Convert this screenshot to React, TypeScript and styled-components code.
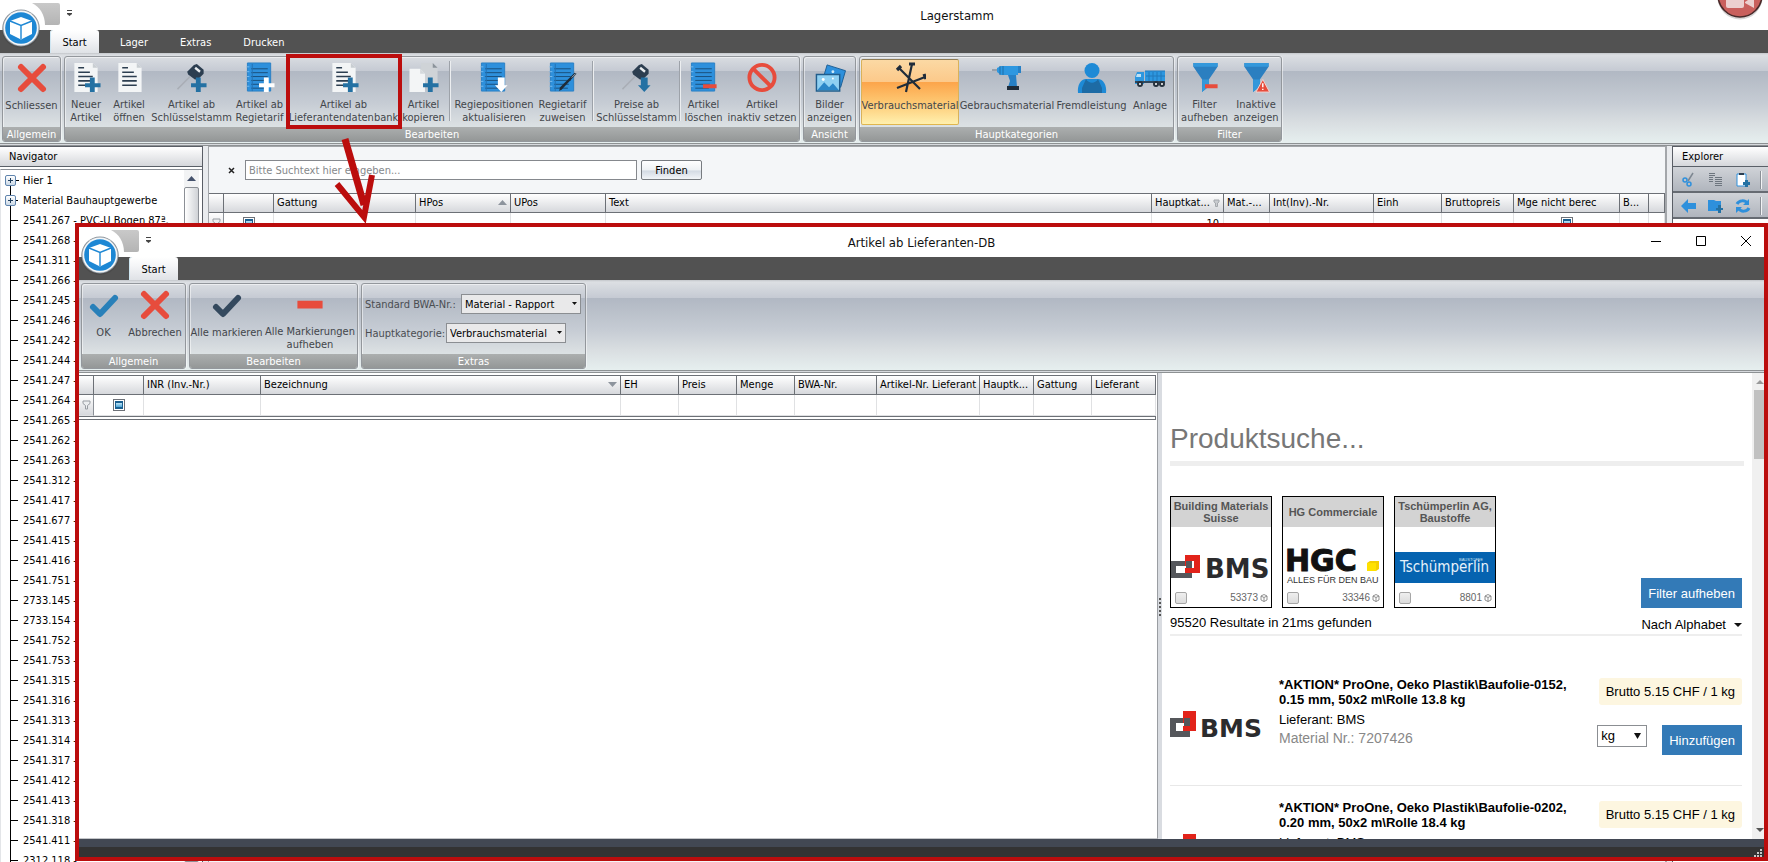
import React, { ReactNode } from 'react';
import styled, { createGlobalStyle, css } from 'styled-components';

const ui = `'DejaVu Sans Condensed', 'DejaVu Sans', sans-serif`;
const web = `'Liberation Sans', Arial, sans-serif`;
const accent = '#bb0d0d';

const GlobalStyle = createGlobalStyle`
  * { box-sizing: border-box; }
  html, body { margin: 0; height: 100%; overflow: hidden; }
  body { font: 11px/13px ${ui}; color: #000; background: #fff; }
  button, input, select { font: inherit; color: inherit; margin: 0; }
  h1, h2, h3, p, ul, dl { margin: 0; padding: 0; font-weight: normal; }
`;

/* ---------- window frame ---------- */

const Desktop = styled.div`
  position: relative;
  display: flex;
  flex-direction: column;
  height: 100vh;
  overflow: hidden;
  background: #e9ebee;
`;

const TitleBar = styled.header`
  position: relative;
  display: flex;
  align-items: center;
  justify-content: center;
  flex: none;
  height: 30px;
  background: #fff;
`;

const TitleText = styled.h1<{ $shift?: boolean }>`
  padding-top: 1px;
  font-size: 13px;
  line-height: 16px;
  color: #111;
  padding-left: ${(p) => (p.$shift ? '146px' : '0')};
`;

const AppBadge = styled.svg`
  position: absolute;
  left: 0;
  top: 0;
  z-index: 2;
  width: 80px;
  height: 50px;
`;

const RecordBadge = styled.svg`
  position: absolute;
  right: 0;
  top: 0;
  width: 56px;
  height: 24px;
`;

const WindowButtons = styled.div`
  position: absolute;
  right: 0;
  top: 0;
  display: flex;
  gap: 9px;
`;

const WindowButton = styled.button`
  width: 36px;
  height: 28px;
  padding: 0;
  border: 0;
  background: none;
  display: flex;
  align-items: center;
  justify-content: center;
`;

const TabBar = styled.nav`
  display: flex;
  flex: none;
  height: 23px;
  padding-left: 50px;
  background: #525252;
`;

const Tab = styled.button<{ $active?: boolean }>`
  border: 0;
  padding: 1px 16px 0;
  background: none;
  color: #fff;
  ${(p) =>
    p.$active &&
    css`
      width: 49px;
      margin-right: 5px;
      padding: 1px 0 0;
      border-radius: 3px 3px 0 0;
      color: #000;
      background: linear-gradient(#fff, #f4f5f7 40%, #dfe2e6);
      box-shadow: inset 1px 0 #cfe6f2;
    `}
`;

const Ribbon = styled.section`
  display: flex;
  flex: none;
  gap: 3px;
  height: 93px;
  padding: 3px 2px 0;
  border-bottom: 3px double #8d9193;
  background: linear-gradient(#c3c6ca 0, #dcdfe3 2px, #c5cad3 18px, #b1b8c3 18px, #c6ccd4 50px, #d9dee1 70px, #e6efef 90px);
`;

const Group = styled.div`
  display: flex;
  flex-direction: column;
  height: 86px;
  border: 1px solid #93979c;
  border-radius: 3px;
  box-shadow: inset 1px 1px rgba(255, 255, 255, 0.5), 1px 0 rgba(255, 255, 255, 0.5);
  overflow: hidden;
`;

const GroupBody = styled.div<{ $inset?: boolean }>`
  display: flex;
  flex: 1;
  padding: 2px ${(p) => (p.$inset ? '1px' : '0')};
`;

const GroupCaption = styled.h2`
  flex: none;
  height: 14px;
  padding-top: 1px;
  font-size: 11px;
  line-height: 13px;
  text-align: center;
  color: #fff;
  background: linear-gradient(#acafaf, #949797);
`;

const Action = styled.button<{ $w: number; $active?: boolean }>`
  display: flex;
  flex-direction: column;
  align-items: center;
  justify-content: flex-start;
  gap: 5px;
  width: ${(p) => p.$w}px;
  height: 66px;
  padding: 2px 0 0;
  border: 1px solid transparent;
  background: none;
  color: #43464b;
  white-space: pre;
  text-align: center;
  ${(p) =>
    p.$active &&
    css`
      border-color: #8f7c55 #d9b25a #e0b64e;
      border-radius: 2px;
      background: linear-gradient(#fbd9a4, #fcc98a 34%, #fca54b 35%, #fdc771 65%, #fff0ae);
    `}
`;

const Separator = styled.i<{ $w: number }>`
  width: ${(p) => p.$w}px;
  height: 60px;
  margin-top: 2px;
  background: linear-gradient(90deg, #9da2a9 1px, #eceef0 1px) center / 2px 100% no-repeat;
`;

const svgIcon = { width: 32, height: 32, viewBox: '0 0 32 32', 'aria-hidden': true } as const;
const blue = '#2e90dc';
const navy = '#2c3e50';
const plusBlue = '#2471a3';
const red = '#e74c3c';

const Plus = ({ c = plusBlue }: { c?: string }) => <path d="M20 16h5v6h6v4h-6v5h-5v-5h-5v-4h5z" fill={c} />;

const Page = ({ x = 0 }: { x?: number }) => (
  <g transform={`translate(${x} 0)`}>
    <path d="M4 1h19l5 5v25H4z" fill="#f3f5f6" />
    <path d="M23 1l5 5h-5z" fill="#c9ced2" />
    <path d="M8 6h6M8 10.5h12M8 15h15M8 19.500h15M8 24h15" stroke={navy} strokeWidth="1.6" />
  </g>
);

const Notebook = ({ left = true }: { left?: boolean }) => (
  <g>
    <path d="M3 1h24v29H3z" fill={blue} />
    <path d="M3 1h24v29H3z" fill="none" stroke="#2a80c4" />
    <g stroke="#1a4f7c">
      <path d="M7 7h17M7 11h17M7 15h17M7 19h17M7 23h15M7 27h14" />
      {left && <path d="M8 2v28" stroke="#2473b4" />}
    </g>
    <path d="M2 5h3M2 10h3M2 15h3M2 20h3M2 25h3" stroke="#7cbcec" />
  </g>
);

const Key = () => (
  <g>
    <path d="M14 15L1 28" stroke="#a9aeb5" strokeWidth="1.500" />
    <path d="M11 10L18 3l3-1 7 6v4l-6 6-3 0-7-5z" fill={navy} />
    <path d="M20 5l5 4-1.500 2-5-4z" fill="#e9edf0" />
  </g>
);

const ArrowDown = ({ c }: { c: string }) => <path d="M20 16h7v8h3l-6.500 7-6.500-7h3z" fill={c} />;

const Cross = () => <path d="M5 5l22 22M27 5L5 27" stroke={red} strokeWidth="6" strokeLinecap="round" />;
const Tick = ({ c }: { c: string }) => (
  <path d="M5 18l7 7L27 9" fill="none" stroke={c} strokeWidth="6" strokeLinecap="round" strokeLinejoin="round" />
);
const Funnel = () => (
  <g>
    <path d="M4 1h25v4L20 18v7l-7 6V18L4 5z" fill="#2b7fc0" />
    <path d="M4 1h25v4H4zM13 18h7v7l-7 6z" fill="#3498db" />
  </g>
);

const icons: Record<string, ReactNode> = {
  close: <Cross />,
  newDoc: <><Page /><Plus /></>,
  doc: <Page x={1} />,
  keyPlus: <><Key /><Plus /></>,
  bookPlus: <><Notebook /><Plus c="#fff" /></>,
  copy: (
    <>
      <path d="M13 1h12l5 5v18H13z" fill="#cfd3d7" />
      <path d="M25 1l5 5h-5z" fill="#8b939b" />
      <path d="M1 7h11l5 5v19H1z" fill="#f3f5f6" />
      <path d="M12 7l5 5h-5z" fill="#d5d9dc" />
      <Plus />
    </>
  ),
  bookDown: <><Notebook /><ArrowDown c="#fff" /></>,
  bookPen: (
    <>
      <Notebook />
      <path d="M30 12L15 28l-3 2 1-4L28 11z" fill="#1f2b38" />
      <path d="M29 12l-4 4" stroke="#9fb0bf" />
    </>
  ),
  keyDown: <><Key /><ArrowDown c={plusBlue} /></>,
  bookMinus: <><Notebook left={false} /><path d="M15 23h14v4H15z" fill={red} /></>,
  ban: (
    <g fill="none" stroke={red} strokeWidth="4">
      <circle cx="16" cy="16" r="13" />
      <path d="M7 7l18 18" />
    </g>
  ),
  pictures: (
    <>
      <path d="M13 3l19 6-5 17-19-6z" fill={blue} stroke="#1d5f96" />
      <circle cx="19" cy="10" r="1.500" fill="#cdeafa" />
      <path d="M2 13h24v17H2z" fill="#8fd0f2" stroke="#215d8c" strokeWidth="1.500" />
      <path d="M3 29l7-8 5 5 4-4 6 7z" fill="#2a86c8" />
      <circle cx="9" cy="18" r="1.500" fill="#fff" />
      <circle cx="19" cy="17" r="1" fill="#fff" />
    </>
  ),
  nails: (
    <g stroke="#1f2c3a" strokeWidth="2.200">
      <path d="M18 2L12 30M5 6l21 21M31 15L3 26" />
      <path d="M15 2h6M3 8l4-4M30 12l2 5" strokeWidth="3.200" />
    </g>
  ),
  drill: (
    <>
      <path d="M1 8h6" stroke="#6b7680" />
      <path d="M6 6l4-2h17v9H10l-4-3z" fill="#2d97e0" />
      <path d="M9 4v9M12 4v9" stroke="#1f6ea8" />
      <path d="M27 4h3v7h-3zM17 13h8l1 12h-9l2-6z" fill="#2680c6" />
      <path d="M16 24h12v4H16z" fill="#1f2c3a" />
    </>
  ),
  person: (
    <>
      <circle cx="16" cy="8.500" r="7.500" fill="#1e8ad6" />
      <path d="M2 31c-1-8 3-14 8-14h12c5 0 9 6 8 14z" fill="#1e8ad6" />
      <path d="M6 31v-5l4-9c3 5 9 5 12 0l4 9v5z" fill="#1d6ba5" />
    </>
  ),
  truck: (
    <>
      <path d="M1 20v-5l2-5h7v12H1z" fill="#2d97e0" />
      <path d="M3 12h4v3H2z" fill="#bfe1f5" />
      <path d="M11 9h20v10H11z" fill="#2d97e0" />
      <path d="M11 9h20M15 10v9M19 10v9M23 10v9M27 10v9M12 14h19" stroke="#2379ba" />
      <path d="M1 19h30v2H1z" fill="#30485c" />
      <g fill="#fff" stroke="#26323d" strokeWidth="2">
        <circle cx="6" cy="22" r="2" /><circle cx="22" cy="22" r="2" /><circle cx="28" cy="22" r="2" />
      </g>
    </>
  ),
  funnelMinus: <><Funnel /><path d="M16 23h13v4H16z" fill={red} /></>,
  funnelWarn: (
    <>
      <Funnel />
      <path d="M23 18l7 13H16z" fill={red} stroke="#f4d2ce" />
      <path d="M23 22v4M23 27.500v1.500" stroke="#fff" strokeWidth="1.500" />
    </>
  ),
  tickBlue: <Tick c="#2980b9" />,
  tickNavy: <Tick c="#34495e" />,
  minus: <path d="M3 12h26v8H3z" fill={red} />,
};

type Item = { icon: string; label: string; w: number; active?: boolean } | { sep: number };

const RibbonGroup = ({ caption, items, inset }: { caption: string; items: Item[]; inset?: boolean }) => (
  <Group>
    <GroupBody $inset={inset}>
      {items.map((it, i) =>
        'sep' in it ? (
          <Separator key={i} $w={it.sep} />
        ) : (
          <Action key={i} type="button" $w={it.w} $active={it.active}>
            <svg {...svgIcon} fill="none">{icons[it.icon]}</svg>
            <span>{it.label}</span>
          </Action>
        ),
      )}
    </GroupBody>
    <GroupCaption>{caption}</GroupCaption>
  </Group>
);

const Badge = ({ id }: { id: string }) => (
  <AppBadge viewBox="0 0 80 50" aria-hidden>
    <defs>
      <linearGradient id={id} x1="0" x2="0" y1="0" y2="1">
        <stop offset="0" stopColor="#c9c9c9" />
        <stop offset="1" stopColor="#b4b4b4" />
      </linearGradient>
    </defs>
    <path d="M32 3h26q2 0 2 2v18q0 2-2 2H45C45 15 40 7 32 3z" fill={`url(#${id})`} />
    <path d="M67 10.500h5M67 13.500h5l-2.500 2z" stroke="#444" fill="#444" />
    <circle cx="21" cy="29" r="19" fill="#3d3d3d" opacity=".35" />
    <circle cx="21" cy="28" r="18.500" fill="#8f979f" />
    <circle cx="21" cy="28" r="17.500" fill="#f4f6f8" />
    <circle cx="21" cy="28" r="15.800" fill="#1d87d4" />
    <path d="M21 17l11 4v13l-11 5.500-11-5.500V21z" fill="#fff" />
    <path d="M10 21l11 4.500L32 21M21 25.500V39" fill="none" stroke="#1d87d4" strokeWidth="1.400" />
  </AppBadge>
);

/* ---------- panels ---------- */

const Workspace = styled.main`
  display: flex;
  flex: 1;
  min-height: 0;
  gap: 5px;
`;

const Navigator = styled.aside`
  display: flex;
  flex-direction: column;
  flex: 0 0 203px;
  border-top: 1px solid #5a5e66;
  border-right: 1px solid #5a5e66;
  background: #fff;
`;

const PanelTitle = styled.h2`
  flex: none;
  height: 20px;
  padding-left: 9px;
  border-bottom: 1px solid #5a6068;
  background: linear-gradient(#fff, #d5d7db);
  font-size: 11px;
  line-height: 20px;
`;

const TreeArea = styled.div`
  display: flex;
  flex: 1;
  min-height: 0;
  margin-top: 2px;
  border-top: 1px solid #8b9097;
  border-left: 1px solid #e3e5e8;
  overflow: hidden;
`;

const Tree = styled.ul`
  flex: 1;
  overflow: hidden;
  list-style: none;
`;

const TreeRow = styled.li<{ $branch?: boolean }>`
  display: flex;
  align-items: center;
  height: 20px;
  padding-left: 22px;
  white-space: nowrap;
  background:
    linear-gradient(#000, #000) 9px 10px / ${(p) => (p.$branch ? '9px' : '8px')} 1px no-repeat,
    linear-gradient(#000, #000) 9px ${(p) => (p.$branch ? '10px' : '0')} / 1px 20px no-repeat;
`;

const Expander = styled.button`
  width: 11px;
  height: 11px;
  margin-left: -18px;
  margin-right: 7px;
  padding: 0;
  border: 1px solid #5f84ad;
  border-radius: 2px;
  background:
    linear-gradient(#22405f, #22405f) center / 5px 1px no-repeat,
    linear-gradient(#22405f, #22405f) center / 1px 5px no-repeat,
    linear-gradient(#fff, #ccd9e6);
`;

const TreeScroll = styled.div`
  display: flex;
  flex-direction: column;
  align-items: center;
  gap: 5px;
  width: 15px;
  margin-right: 3px;
  padding-top: 6px;
  background: #f2f3f4;
`;

const Thumb = styled.div`
  flex: 1;
  width: 15px;
  border: 1px solid #8b8f95;
  border-radius: 2px;
  background: linear-gradient(90deg, #fff, #cfd2d6);
`;

const Content = styled.section`
  flex: 1;
  min-width: 0;
  border: 1px solid #a3a6aa;
  border-width: 1px 2px 0 1px;
  background: #f4f6f8;
  overflow: hidden;
`;

const SearchBar = styled.form`
  display: flex;
  align-items: center;
  height: 46px;
  padding-left: 17px;
`;

const ClearButton = styled.button`
  width: 11px;
  margin-right: 8px;
  padding: 0;
  border: 0;
  background: none;
  line-height: 0;
`;

const SearchInput = styled.input`
  width: 392px;
  height: 20px;
  margin-right: 4px;
  padding: 0 3px;
  border: 1px solid #85888d;
  background: #fff;
  &::placeholder { color: #85888b; opacity: 1; }
`;

const FindButton = styled.button`
  width: 61px;
  height: 20px;
  padding: 0;
  border: 1px solid #777b80;
  border-radius: 2px;
  background: linear-gradient(#fff, #eef1f4 50%, #d3dae3 55%, #f2f5f8);
`;

const Grid = styled.table`
  width: 100%;
  table-layout: fixed;
  border-collapse: separate;
  border-spacing: 0;
  background: #fff;
`;

const HeadCell = styled.th`
  height: 20px;
  padding: 0 3px 1px;
  border: 1px solid #6c7076;
  border-width: 1px 1px 1px 0;
  background: linear-gradient(#fff, #d6d8dc);
  font-weight: normal;
  text-align: left;
  white-space: nowrap;
  overflow: hidden;
`;

const HeadInner = styled.span`
  display: flex;
  align-items: center;
  justify-content: space-between;
`;

const Cell = styled.td<{ $center?: boolean; $head?: boolean }>`
  height: 21px;
  padding: 0 4px;
  border-right: 1px solid ${(p) => (p.$head ? '#8b9097' : '#e0e1e3')};
  border-bottom: 1px solid #e0e1e3;
  text-align: ${(p) => (p.$center ? 'center' : 'right')};
  line-height: 0;
  vertical-align: middle;
  overflow: hidden;
  ${(p) => p.$head && 'background: linear-gradient(#fff, #d6d8dc); padding: 0 2px;'}
`;

const CellText = styled.span`
  line-height: 13px;
`;

const TriBox = styled.input`
  appearance: none;
  display: inline-block;
  width: 12px;
  height: 12px;
  vertical-align: middle;
  border: 1px solid #6d7178;
  background:
    linear-gradient(#bfe4f5, #4aa5d8) center / 6px 4px no-repeat,
    linear-gradient(#1b5f8f, #1b5f8f) center / 8px 8px no-repeat,
    #fff;
`;

const Explorer = styled.aside`
  flex: 0 0 96px;
  border-top: 1px solid #5a5e66;
  border-left: 1px solid #5a5e66;
  background: #fff;
  overflow: hidden;
`;

const Tools = styled.div`
  display: flex;
  align-items: center;
  gap: 11px;
  height: 26px;
  padding: 2px 0 0 8px;
  border-bottom: 2px solid #666b72;
  background: linear-gradient(#d0d3d8, #b0b5bd);
`;

const Tool = styled.button`
  flex: none;
  width: 16px;
  height: 16px;
  padding: 0;
  border: 0;
  background: none;
  line-height: 0;
`;

const ToolDivider = styled.i`
  flex: none;
  width: 2px;
  height: 18px;
  margin: 0 -6px 0 -2px;
  background: linear-gradient(90deg, #8b9097 50%, #f2f3f4 50%);
`;

type Column = { w?: number; label?: string; mark?: 'up' | 'down' | 'filter'; cell?: 'filter' | 'box' | 'number' };

const FilterGlyph = () => (
  <svg width="9" height="10" viewBox="0 0 9 10" fill="#eceef0" stroke="#999da3" aria-hidden>
    <path d="M1 1h7v2.500L5.500 5.500V9h-2V5.500L1 3.500z" />
  </svg>
);

const mark = {
  up: <svg width="9" height="6" viewBox="0 0 9 6" aria-hidden><path d="M0 5l4.500-5L9 5z" fill="#8d949d" /></svg>,
  down: <svg width="9" height="6" viewBox="0 0 9 6" aria-hidden><path d="M0 0l4.500 5L9 0z" fill="#8d949d" /></svg>,
  filter: (
    <svg width="7" height="8" viewBox="0 0 7 8" fill="#c9ccd0" stroke="#a4a8ad" aria-hidden>
      <path d="M1 1h5v2L4.500 4v3.500h-2V4L1 3z" />
    </svg>
  ),
};

const DataGrid = ({ columns }: { columns: Column[] }) => (
  <Grid>
    <colgroup>
      {columns.map((c, i) => (
        <col key={i} width={c.w} />
      ))}
    </colgroup>
    <thead>
      <tr>
        {columns.map((c, i) => (
          <HeadCell key={i} scope="col">
            <HeadInner>
              {c.label}
              {c.mark && mark[c.mark]}
            </HeadInner>
          </HeadCell>
        ))}
      </tr>
    </thead>
    <tbody>
      <tr>
        {columns.map((c, i) => (
          <Cell key={i} $center={c.cell === 'box'} $head={c.cell === 'filter'}>
            {c.cell === 'filter' && <FilterGlyph />}
            {c.cell === 'box' && <TriBox type="checkbox" aria-label="Filter" />}
            {c.cell === 'number' && <CellText>10</CellText>}
          </Cell>
        ))}
      </tr>
    </tbody>
  </Grid>
);

/* ---------- annotations ---------- */

const Highlight = styled.div`
  position: absolute;
  left: 286px;
  top: 54px;
  width: 116px;
  height: 75px;
  border: 4px solid ${accent};
  pointer-events: none;
`;

const Pointer = styled.svg`
  position: absolute;
  left: 330px;
  top: 130px;
  width: 60px;
  height: 94px;
`;

/* ---------- supplier dialog ---------- */

const Dialog = styled.section`
  position: absolute;
  left: 75px;
  top: 223px;
  right: 0;
  bottom: 1px;
  display: flex;
  flex-direction: column;
  border: 4px solid ${accent};
  background: #fff;
`;

const DialogBody = styled.div`
  display: flex;
  flex: 1;
  min-height: 0;
`;

const ResultPane = styled.div`
  flex: 1;
  min-width: 0;
  padding: 2px 1px 0 0;
  border-right: 1px solid #9a9da2;
  border-bottom: 1px solid #c4c6c9;
`;

const EmptyLine = styled.div`
  height: 4px;
  border: 1px solid #6c7076;
  border-left: 0;
`;

const Splitter = styled.div`
  display: flex;
  align-items: center;
  justify-content: center;
  width: 4px;
  background: #d9dce1;
`;

const WebPane = styled.div`
  display: flex;
  flex: 0 0 602px;
  font: 13px/16px ${web};
  overflow: hidden;
`;

const WebContent = styled.div`
  flex: 1;
  padding: 44px 8px 0 8px;
  overflow: hidden;
`;

const WebScroll = styled.div`
  display: flex;
  flex-direction: column;
  align-items: flex-end;
  flex: none;
  width: 12px;
  padding: 7px 0 7px;
  background: #f0f0f0;
`;

const WebThumb = styled.div`
  width: 10px;
  height: 69px;
  margin: 6px 0 auto;
  background: #c1c1c1;
`;

const ProductSearch = styled.input`
  display: block;
  width: 100%;
  height: 49px;
  padding: 0;
  border: 0;
  border-bottom: 5px solid #eee;
  background: none;
  font-size: 28px;
  &::placeholder { color: #777; opacity: 1; }
`;

const FilterRow = styled.div`
  display: flex;
  align-items: flex-end;
  justify-content: space-between;
  padding: 30px 2px 0 0;
`;

const Suppliers = styled.div`
  display: flex;
  gap: 10px;
`;

const Supplier = styled.label`
  display: flex;
  flex-direction: column;
  width: 102px;
  height: 112px;
  border: 1px solid #000;
`;

const SupplierName = styled.span`
  display: flex;
  align-items: center;
  justify-content: center;
  height: 30px;
  background: #d3d3d3;
  color: #555;
  font-size: 11px;
  font-weight: bold;
  line-height: 12px;
  text-align: center;
  white-space: pre;
`;

const SupplierFoot = styled.span`
  display: flex;
  align-items: center;
  gap: 2px;
  height: 19px;
  padding: 1px 3px 0 4px;
  color: #666;
  font-size: 10px;
  line-height: 12px;
`;

const SupplierCheck = styled.input`
  appearance: none;
  width: 12px;
  height: 12px;
  margin-right: auto;
  border: 1px solid #a6a6a6;
  border-radius: 2px;
  background: linear-gradient(#efefef, #dcdcdc);
`;

const PrimaryButton = styled.button`
  height: 30px;
  margin: 0;
  padding: 1px 7px 0;
  border: 0;
  background: #337ab7;
  color: #fff;
`;

const CountRow = styled.div`
  display: flex;
  align-items: center;
  justify-content: space-between;
  height: 28px;
  padding-top: 4px;
  margin-right: 2px;
  border-bottom: 2px solid #eee;
`;

const SortButton = styled.button`
  display: flex;
  align-items: center;
  gap: 8px;
  padding: 4px 0 0;
  border: 0;
  background: none;
`;

const Product = styled.article`
  display: flex;
  height: 123px;
  margin-right: 2px;
  border-bottom: 1px solid #e8e8e8;
  & + & { border-bottom: 0; }
`;

const Products = styled.div`
  padding-top: 27px;
`;

const ProductImage = styled.div`
  width: 92px;
  padding-top: 47px;
  margin-right: 17px;
`;

const ProductText = styled.div`
  flex: 1;
  padding-top: 14px;
`;

const ProductName = styled.h3`
  margin-bottom: 3px;
  font-size: 13px;
  font-weight: bold;
  line-height: 15px;
  white-space: pre;
`;

const ProductMeta = styled.p<{ $muted?: boolean }>`
  font-size: ${(p) => (p.$muted ? '14px' : '13px')};
  line-height: 19px;
  color: ${(p) => (p.$muted ? '#888' : '#000')};
`;

const ProductSide = styled.div`
  display: flex;
  flex-direction: column;
  align-items: flex-end;
  gap: 20px;
  padding-top: 15px;
`;

const Price = styled.div`
  height: 27px;
  padding: 0 7px;
  border-radius: 3px;
  background: #fdf6e0;
  line-height: 27px;
`;

const Order = styled.div`
  display: flex;
  align-items: flex-start;
  gap: 15px;
`;

const SelectBox = styled.span<{ $w: number; $unit?: boolean }>`
  position: relative;
  display: inline-flex;
  width: ${(p) => p.$w}px;
  height: ${(p) => (p.$unit ? '22px' : '20px')};
  svg {
    position: absolute;
    right: ${(p) => (p.$unit ? '6px' : '4px')};
    top: 8px;
    pointer-events: none;
  }
  select {
    appearance: none;
    width: 100%;
    padding: 0 3px;
    border: 1px solid #8b8e92;
    border-radius: 0;
    background: ${(p) => (p.$unit ? '#fff' : '#e9e9ea')};
  }
`;

const ExtrasFields = styled.div`
  display: flex;
  flex-direction: column;
  gap: 9px;
  width: 223px;
  height: 66px;
  padding: 8px 0 0 3px;
`;

const Field = styled.label`
  display: flex;
  align-items: center;
  color: #4a4d52;
  white-space: nowrap;
  select { color: #000; }
`;

const FieldName = styled.span<{ $w: number }>`
  width: ${(p) => p.$w}px;
`;

const StatusBar = styled.footer`
  display: flex;
  flex: none;
  align-items: flex-end;
  justify-content: flex-end;
  height: 18px;
  background: linear-gradient(#424853 8px, #333 8px);
`;

const BmsMark = ({ w }: { w: number }) => (
  <svg width={w} height={28} viewBox="0 0 92 28" role="img" aria-label="BMS">
    <path fillRule="evenodd" d="M0 8h20v19H0zM6 13v8h8v-8z" fill="#55575b" />
    <path fillRule="evenodd" d="M13 1h13v20H13zM14 8v8h6V8z" fill="#e2231a" />
    <path d="M6 13h8v3H6z" fill="#fff" />
    <text x="30" y="27" fontFamily="DejaVu Sans" fontWeight="bold" fontSize="25" fill="#2b2b2d">BMS</text>
  </svg>
);

const logos: Record<string, ReactNode> = {
  bms: <svg width="100" height="61" viewBox="0 0 100 61" aria-hidden>
    <path fillRule="evenodd" d="M0 34h21v17H0zM5 39v7h10v-7z" fill="#55575b" />
    <path fillRule="evenodd" d="M14 28h15v18H14zM15 34v7h8v-7z" fill="#e2231a" />
    <path d="M5 39h10v2H5z" fill="#fff" />
    <text x="34" y="51" fontFamily="DejaVu Sans" fontWeight="bold" fontSize="26" fill="#2b2b2d">BMS</text>
  </svg>,
  hgc: <svg width="100" height="61" viewBox="0 0 100 61" aria-hidden>
    <text x="2" y="44" fontFamily="DejaVu Sans" fontWeight="bold" fontSize="30" fill="#111" stroke="#111">HGC</text>
    <path d="M84 36l3-2h9v8l-3 2h-9z" fill="#f4cf00" />
    <path d="M84 36h9v8h-9z" fill="#ffe100" />
    <text x="4" y="56" fontFamily="Liberation Sans" fontSize="9" fill="#333">ALLES FÜR DEN BAU</text>
  </svg>,
  tsch: <svg width="100" height="61" viewBox="0 0 100 61" aria-hidden>
    <path d="M0 25h100v31H0z" fill="#0563b0" />
    <text x="5" y="45" fontFamily="DejaVu Sans Condensed" fontSize="15" fill="#e6f1fa">Tschümperlin</text>
    <text x="64" y="34" fontFamily="Liberation Sans" fontSize="4" fill="#cfe3f3">BAUSTOFFE</text>
  </svg>,
};

const suppliers = [
  { name: 'Building Materials\nSuisse', logo: 'bms', count: '53373' },
  { name: 'HG Commerciale', logo: 'hgc', count: '33346' },
  { name: 'Tschümperlin AG,\nBaustoffe', logo: 'tsch', count: '8801' },
];

const products = [
  { name: '*AKTION* ProOne, Oeko Plastik\\Baufolie-0152,\n0.15 mm, 50x2 m\\Rolle 13.8 kg', nr: '7207426' },
  { name: '*AKTION* ProOne, Oeko Plastik\\Baufolie-0202,\n0.20 mm, 50x2 m\\Rolle 18.4 kg', nr: '7207427' },
];

const articles = (
  '268 311 266 245 246 242 244 247 264 265 262 263 312 417 677 415 416 751'
).split(' ').map((n) => `2541.${n} -`).concat(
  ['2733.145 -', '2733.154 -'],
  '752 753 315 316 313 314 317 412 413 318 411'.split(' ').map((n) => `2541.${n} -`),
  ['2312.118 -'],
);

const stockColumns: Column[] = [
  { w: 15, cell: 'filter' },
  { w: 50, cell: 'box' },
  { w: 142, label: 'Gattung' },
  { w: 95, label: 'HPos', mark: 'up' },
  { w: 95, label: 'UPos' },
  { label: 'Text' },
  { w: 72, label: 'Hauptkat...', mark: 'filter', cell: 'number' },
  { w: 46, label: 'Mat.-...' },
  { w: 104, label: 'Int(Inv).-Nr.' },
  { w: 68, label: 'Einh' },
  { w: 72, label: 'Bruttopreis' },
  { w: 106, label: 'Mge nicht berec', cell: 'box' },
  { w: 29, label: 'B...' },
  { w: 16 },
];

const supplierColumns: Column[] = [
  { w: 15, cell: 'filter' },
  { w: 50, cell: 'box' },
  { w: 117, label: 'INR (Inv.-Nr.)' },
  { label: 'Bezeichnung', mark: 'down' },
  { w: 58, label: 'EH' },
  { w: 58, label: 'Preis' },
  { w: 58, label: 'Menge' },
  { w: 82, label: 'BWA-Nr.' },
  { w: 103, label: 'Artikel-Nr. Lieferant' },
  { w: 54, label: 'Hauptk...' },
  { w: 58, label: 'Gattung' },
  { w: 64, label: 'Lieferant' },
];

const Caret = ({ w = 5 }: { w?: number }) => (
  <svg width={w} height={w > 5 ? 4 : 3} viewBox="0 0 8 4" preserveAspectRatio="none" aria-hidden><path d="M0 0h8L4 4z" fill="#111" /></svg>
);

const Cube = () => (
  <svg width="8" height="8" viewBox="0 0 8 8" fill="none" stroke="#777" strokeWidth=".8" aria-hidden>
    <path d="M4 .5l3 1.500v4L4 7.500 1 6V2zM1 2l3 1.500L7 2M4 3.500v4" />
  </svg>
);

const SupplierDialog = () => (
  <Dialog role="dialog" aria-label="Artikel ab Lieferanten-DB">
    <TitleBar>
      <Badge id="quick-dialog" />
      <TitleText>Artikel ab Lieferanten-DB</TitleText>
      <WindowButtons>
        <WindowButton aria-label="Minimieren"><svg width="12" height="12"><path d="M1 6.500h10" stroke="#000" /></svg></WindowButton>
        <WindowButton aria-label="Maximieren"><svg width="12" height="12"><path d="M1.500 1.500h9v9h-9z" fill="none" stroke="#000" /></svg></WindowButton>
        <WindowButton aria-label="Fenster schliessen"><svg width="12" height="12"><path d="M1 1l10 10M11 1L1 11" stroke="#000" /></svg></WindowButton>
      </WindowButtons>
    </TitleBar>
    <TabBar><Tab $active>Start</Tab></TabBar>
    <Ribbon>
      <RibbonGroup caption="Allgemein" items={[
        { icon: 'tickBlue', label: 'OK', w: 43 },
        { icon: 'close', label: 'Abbrechen', w: 60 },
      ]} />
      <RibbonGroup caption="Bearbeiten" items={[
        { icon: 'tickNavy', label: 'Alle markieren', w: 73 },
        { icon: 'minus', label: 'Alle Markierungen\naufheben', w: 94 },
      ]} />
      <Group>
        <GroupBody>
          <ExtrasFields>
            <Field>
              <FieldName $w={96}>Standard BWA-Nr.:</FieldName>
              <SelectBox $w={120}>
                <select><option>Material - Rapport</option></select><Caret />
              </SelectBox>
            </Field>
            <Field>
              <FieldName $w={81}>Hauptkategorie:</FieldName>
              <SelectBox $w={120}>
                <select><option>Verbrauchsmaterial</option></select><Caret />
              </SelectBox>
            </Field>
          </ExtrasFields>
        </GroupBody>
        <GroupCaption>Extras</GroupCaption>
      </Group>
    </Ribbon>
    <DialogBody>
      <ResultPane>
        <DataGrid columns={supplierColumns} />
        <EmptyLine />
      </ResultPane>
      <Splitter>
        <svg width="4" height="19" viewBox="0 0 4 19" aria-hidden><path d="M2 1v18" stroke="#555" strokeWidth="2" strokeDasharray="2 2" /></svg>
      </Splitter>
      <WebPane>
        <WebContent>
          <ProductSearch placeholder="Produktsuche..." aria-label="Produktsuche" />
          <FilterRow>
            <Suppliers>
              {suppliers.map((s) => (
                <Supplier key={s.logo}>
                  <SupplierName>{s.name}</SupplierName>
                  {logos[s.logo]}
                  <SupplierFoot>
                    <SupplierCheck type="checkbox" />
                    {s.count}
                    <Cube />
                  </SupplierFoot>
                </Supplier>
              ))}
            </Suppliers>
            <PrimaryButton type="button">Filter aufheben</PrimaryButton>
          </FilterRow>
          <CountRow>
            <span>95520 Resultate in 21ms gefunden</span>
            <SortButton type="button">Nach Alphabet<Caret w={8} /></SortButton>
          </CountRow>
          <Products>
            {products.map((p) => (
              <Product key={p.nr}>
                <ProductImage><BmsMark w={92} /></ProductImage>
                <ProductText>
                  <ProductName>{p.name}</ProductName>
                  <ProductMeta>Lieferant: BMS</ProductMeta>
                  <ProductMeta $muted>Material Nr.: {p.nr}</ProductMeta>
                </ProductText>
                <ProductSide>
                  <Price>Brutto 5.15 CHF / 1 kg</Price>
                  <Order>
                    <SelectBox $w={50} $unit>
                      <select aria-label="Einheit"><option>kg</option></select>
                      <svg width="7" height="6" aria-hidden><path d="M0 0h7L3.500 6z" fill="#111" /></svg>
                    </SelectBox>
                    <PrimaryButton type="button">Hinzufügen</PrimaryButton>
                  </Order>
                </ProductSide>
              </Product>
            ))}
          </Products>
        </WebContent>
        <WebScroll>
          <svg width="8" height="4" aria-hidden><path d="M0 4h8L4 0z" fill="#999" /></svg>
          <WebThumb />
          <svg width="8" height="4" aria-hidden><path d="M0 0h8L4 4z" fill="#555" /></svg>
        </WebScroll>
      </WebPane>
    </DialogBody>
    <StatusBar>
      <svg width="10" height="10" aria-hidden><path d="M6 3h2M3 6h2M6 6h2M0 9h2M3 9h2M6 9h2" stroke="#c8c8c8" strokeWidth="2" /></svg>
    </StatusBar>
  </Dialog>
);

export default function App() {
  return (
    <Desktop>
      <GlobalStyle />
      <TitleBar>
        <Badge id="quick-main" />
        <TitleText $shift>Lagerstamm</TitleText>
        <RecordBadge viewBox="0 0 56 24" aria-hidden>
          <circle cx="28" cy="-3" r="22.500" fill="#999" opacity=".4" />
          <circle cx="28" cy="-5" r="22" fill="#c9605d" stroke="#4a2a2a" strokeWidth="1.500" />
          <path d="M14-10h18v16q0 2-2 2H16q-2 0-2-2zM33 2l9-6v12l-9-5z" fill="#ecd0cf" />
        </RecordBadge>
      </TitleBar>
      <TabBar>
        <Tab $active>Start</Tab>
        <Tab>Lager</Tab>
        <Tab>Extras</Tab>
        <Tab>Drucken</Tab>
      </TabBar>
      <Ribbon>
        <RibbonGroup caption="Allgemein" items={[{ icon: 'close', label: 'Schliessen', w: 57 }]} />
        <RibbonGroup caption="Bearbeiten" items={[
          { icon: 'newDoc', label: 'Neuer\nArtikel', w: 42 },
          { icon: 'doc', label: 'Artikel\nöffnen', w: 44 },
          { icon: 'keyPlus', label: 'Artikel ab\nSchlüsselstamm', w: 81 },
          { icon: 'bookPlus', label: 'Artikel ab\nRegietarif', w: 55 },
          { icon: 'newDoc', label: 'Artikel ab\nLieferantendatenbank', w: 113 },
          { icon: 'copy', label: 'Artikel\nkopieren', w: 47 },
          { sep: 6 },
          { icon: 'bookDown', label: 'Regiepositionen\naktualisieren', w: 82 },
          { icon: 'bookPen', label: 'Regietarif\nzuweisen', w: 55 },
          { sep: 6 },
          { icon: 'keyDown', label: 'Preise ab\nSchlüsselstamm', w: 81 },
          { sep: 5 },
          { icon: 'bookMinus', label: 'Artikel\nlöschen', w: 43 },
          { icon: 'ban', label: 'Artikel\ninaktiv setzen', w: 74 },
        ]} />
        <RibbonGroup caption="Ansicht" items={[{ icon: 'pictures', label: 'Bilder\nanzeigen', w: 51 }]} />
        <RibbonGroup caption="Hauptkategorien" inset items={[
          { icon: 'nails', label: 'Verbrauchsmaterial', w: 98, active: true },
          { icon: 'drill', label: 'Gebrauchsmaterial', w: 96 },
          { icon: 'person', label: 'Fremdleistung', w: 73 },
          { icon: 'truck', label: 'Anlage', w: 44 },
        ]} />
        <RibbonGroup caption="Filter" items={[
          { icon: 'funnelMinus', label: 'Filter\naufheben', w: 53 },
          { icon: 'funnelWarn', label: 'Inaktive\nanzeigen', w: 50 },
        ]} />
      </Ribbon>
      <Workspace>
        <Navigator>
          <PanelTitle>Navigator</PanelTitle>
          <TreeArea>
            <Tree>
              <TreeRow $branch><Expander aria-label="Hier 1 öffnen" />Hier 1</TreeRow>
              <TreeRow><Expander aria-label="Material öffnen" />Material Bauhauptgewerbe</TreeRow>
              <TreeRow>2541.267 - PVC-U Bogen 87ª,</TreeRow>
              {articles.map((a) => (
                <TreeRow key={a}>{a}</TreeRow>
              ))}
            </Tree>
            <TreeScroll>
              <svg width="9" height="6" aria-hidden><path d="M0 5l4.500-5L9 5z" fill="#44516b" /></svg>
              <Thumb />
            </TreeScroll>
          </TreeArea>
        </Navigator>
        <Content>
          <SearchBar>
            <ClearButton type="button" aria-label="Suche leeren">
              <svg width="7" height="7"><path d="M1 1l5 5M6 1L1 6" stroke="#222" strokeWidth="1.500" /></svg>
            </ClearButton>
            <SearchInput placeholder="Bitte Suchtext hier eingeben..." aria-label="Suchtext" />
            <FindButton type="button">Finden</FindButton>
          </SearchBar>
          <DataGrid columns={stockColumns} />
        </Content>
        <Explorer>
          <PanelTitle>Explorer</PanelTitle>
          <Tools>
            <Tool aria-label="Ausschneiden">
              <svg width="16" height="16" fill="none" stroke={blue} strokeWidth="1.500"><path d="M12 1L7 9" stroke="#7d8690" /><circle cx="4" cy="8" r="2" /><circle cx="8" cy="12" r="2" /></svg>
            </Tool>
            <Tool aria-label="Kopieren">
              <svg width="16" height="16" stroke="#6d757e"><path d="M1 1.500h6M1 3.500h6M1 5.500h4M1 7.500h4M1 9.500h4M7 5.500h7M7 7.500h7M7 9.500h7M7 11.500h7M7 13.500h7" /></svg>
            </Tool>
            <Tool aria-label="Einfügen">
              <svg width="16" height="16"><path d="M2 2h9v12H2z" fill="#fff" stroke={blue} /><path d="M4 1h5v2H4z" fill={navy} /><path d="M10 8h3v2h2v3h-2v2h-3v-2H8v-3h2z" fill={plusBlue} /></svg>
            </Tool>
            <ToolDivider />
            <Tool aria-label="Ansicht"><svg width="16" height="16"><path d="M1 1h6v5H1zM1 8h6v6H1z" fill={blue} /></svg></Tool>
          </Tools>
          <Tools>
            <Tool aria-label="Zurück"><svg width="16" height="16"><path d="M0 8l7-7v4h8v6H7v4z" fill={blue} /></svg></Tool>
            <Tool aria-label="Neuer Ordner">
              <svg width="16" height="16"><path d="M0 2h6l2 1h5v10H0z" fill={blue} /><path d="M10 7h3v3h2v2h-2v3h-3v-3H8v-2h2z" fill={plusBlue} /></svg>
            </Tool>
            <Tool aria-label="Aktualisieren">
              <svg width="16" height="16" fill="none" stroke={blue} strokeWidth="3"><path d="M2 6c2-4 8-4 10-1M14 10c-2 4-8 4-10 1" /><path d="M14 1v6H8zM1 15V9h6z" fill={blue} stroke="none" /></svg>
            </Tool>
            <ToolDivider />
            <Tool aria-label="Speichern"><svg width="16" height="16"><path d="M1 2h12v12H1z" fill="#2b4f8c" /></svg></Tool>
          </Tools>
        </Explorer>
      </Workspace>
      <Highlight />
      <Pointer viewBox="0 0 60 94" aria-hidden>
        <path d="M15 9l19 66" stroke={accent} strokeWidth="7" />
        <path d="M7 54l27 33 8-42" fill="none" stroke={accent} strokeWidth="6" strokeMiterlimit="8" />
      </Pointer>
      <SupplierDialog />
    </Desktop>
  );
}
